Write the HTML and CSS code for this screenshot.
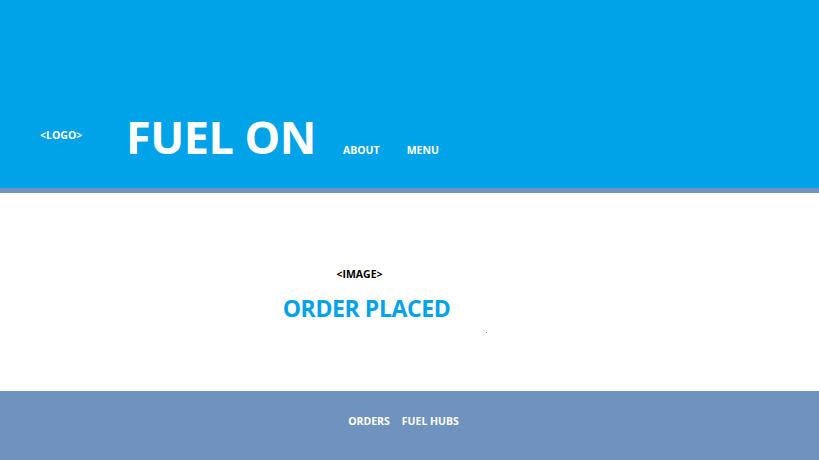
FILE: index.html
```html
<!DOCTYPE html>
<html>
<head>
<meta charset="utf-8">
<link rel="stylesheet" href="styles.css">
</head>
<body>
<header class="header">
  <div class="logo">&lt;LOGO&gt;</div>
  <h1 class="title">FUEL ON</h1>
  <nav class="nav">
    <a class="nav-link">ABOUT</a>
    <a class="nav-link">MENU</a>
  </nav>
</header>
<main class="content">
  <div class="image-ph">&lt;IMAGE&gt;</div>
  <h2 class="status">ORDER PLACED</h2>
  <span class="dot"></span>
</main>
<footer class="footer">
  <a class="foot-link">ORDERS</a>
  <a class="foot-link">FUEL HUBS</a>
</footer>
</body>
</html>
```
FILE: styles.css
```css
* { box-sizing: border-box; margin: 0; padding: 0; }
html, body { width: 819px; height: 460px; overflow: hidden; }
body {
  font-family: "Open Sans", "Noto Sans", sans-serif;
  font-weight: 700;
  background: #ffffff;
}
.header {
  height: 193px;
  background: #00a2e8;
  border-bottom: 5px solid #7092be;
  display: flex;
  align-items: flex-end;
  padding: 0 0 26px 40px;
  color: #ffffff;
}
.logo {
  font-size: 10.5px;
  line-height: 14px;
  margin-bottom: 20px;
  width: 86px;
}
.title {
  font-size: 45px;
  line-height: 50px;
  font-weight: 700;
  letter-spacing: -0.5px;
}
.nav {
  display: flex;
  gap: 27px;
  margin-left: 27px;
  margin-bottom: 5px;
}
.nav-link {
  font-size: 10.5px;
  line-height: 14px;
}
.content {
  height: 198px;
  display: flex;
  flex-direction: column;
  align-items: center;
  padding-top: 74px;
  padding-right: 86px;
  position: relative;
}
.image-ph {
  font-size: 10.5px;
  line-height: 14px;
  color: #000000;
  margin-left: -14px;
}
.status {
  margin-top: 12px;
  font-size: 23px;
  line-height: 30px;
  color: #00a2e8;
  letter-spacing: -0.4px;
}
.dot {
  position: absolute;
  left: 486px;
  top: 139px;
  width: 1px;
  height: 1px;
  background: #3a8fd0;
}
.footer {
  height: 69px;
  background: #7092be;
  color: #ffffff;
  display: flex;
  justify-content: center;
  gap: 12px;
  padding-top: 23px;
  padding-right: 12px;
}
.foot-link {
  font-size: 10.5px;
  line-height: 14px;
}
```
